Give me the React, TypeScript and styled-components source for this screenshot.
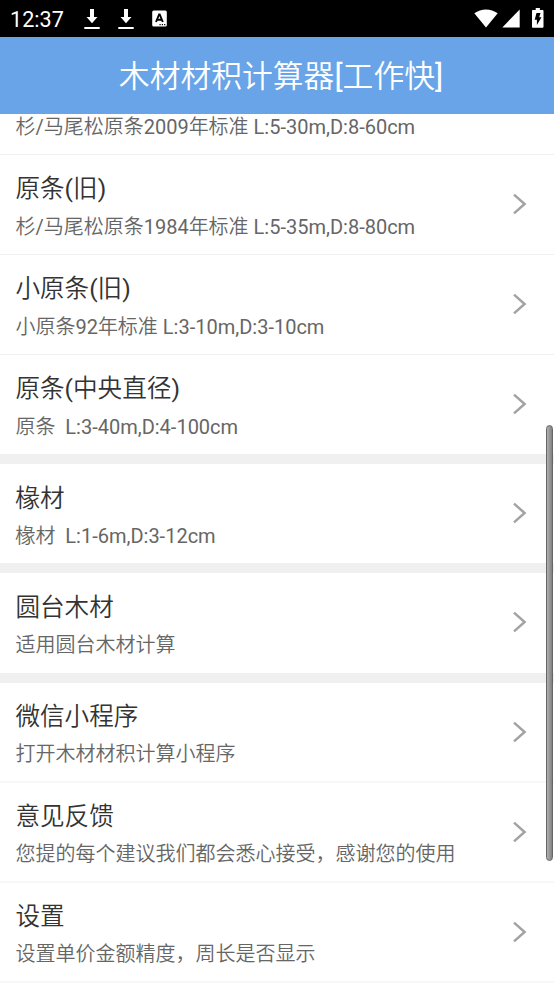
import React from 'react';
import styled, { createGlobalStyle } from 'styled-components';

const GlobalStyle = createGlobalStyle`
  * { box-sizing: border-box; }
  body { margin: 0; background: #fff; font-family: Roboto, "Noto Sans CJK SC", sans-serif; }
`;

const Screen = styled.div`
  position: relative;
  width: 554px;
  height: 984px;
  display: flex;
  flex-direction: column;
  overflow: hidden;
  background: #fff;
`;

const StatusBar = styled.div`
  flex: none;
  height: 37px;
  padding: 0 9px 0 10px;
  display: flex;
  align-items: center;
  justify-content: space-between;
  background: #000;
  color: #fff;
`;

const StatusGroup = styled.div`
  display: flex;
  align-items: center;
  height: 37px;
`;

const Clock = styled.span`
  width: 74px;
  font-size: 21.6px;
  font-weight: 450;
  line-height: 37px;
  padding-top: 1px;
`;

const StatusIcon = styled.svg<{ $gap?: number }>`
  display: block;
  flex: none;
  margin-left: ${(p) => p.$gap ?? 0}px;
`;

const Header = styled.header`
  flex: none;
  height: 77px;
  padding: 3px 0 0 8px;
  display: flex;
  align-items: center;
  justify-content: center;
  background: #68a4e7;
  color: #fff;
  font-size: 30.8px;
  line-height: 74px;
  white-space: nowrap;
`;

const List = styled.main`
  flex: 1;
  min-height: 0;
  display: flex;
  flex-direction: column;
  justify-content: flex-end;
  overflow: hidden;
  padding-bottom: 1px;
`;

const Row = styled.div<{ $height: number }>`
  flex: none;
  height: ${(p) => p.$height}px;
  padding: 0 27px 0 15.4px;
  display: flex;
  align-items: flex-start;
  justify-content: space-between;
`;

const Separator = styled.div<{ $size: number }>`
  flex: none;
  height: ${(p) => p.$size}px;
  background: ${(p) => (p.$size === 2 ? '#f7f7f7' : '#f0f0f0')};
`;

const Texts = styled.div<{ $top: number; $titleHeight: number }>`
  display: grid;
  grid-template-rows: ${(p) => p.$titleHeight}px 38px;
  padding-top: ${(p) => p.$top}px;
  white-space: pre;
`;

const Title = styled.div`
  font-size: 24.6px;
  line-height: 36px;
  color: #333;
`;

const Detail = styled.div`
  font-size: 20px;
  line-height: 38px;
  color: #666;
`;

const Han = styled.span`
  font-weight: 350;
`;

const ChevronIcon = styled.svg<{ $top: number }>`
  display: block;
  flex: none;
  margin-top: ${(p) => p.$top}px;
`;

const Scrollbar = styled.div`
  position: absolute;
  top: 425px;
  right: 1px;
  width: 7px;
  height: 436px;
  border: 1px solid #666;
  border-radius: 4px;
  background: linear-gradient(90deg, #b0b0b0, #808080);
`;

type Item = {
  title?: string;
  detail: string;
  height: number;
  after: number;
  top: number;
  titleHeight: number;
};

const upper = { height: 99, top: 16, titleHeight: 37 };
const middle = { height: 99, top: 17, titleHeight: 36 };
const lower = { height: 98, after: 2, top: 16, titleHeight: 36 };

const items: Item[] = [
  { ...upper, detail: '杉/马尾松原条2009年标准 L:5-30m,D:8-60cm', after: 1 },
  { ...upper, title: '原条(旧)', detail: '杉/马尾松原条1984年标准 L:5-35m,D:8-80cm', after: 1 },
  { ...upper, title: '小原条(旧)', detail: '小原条92年标准 L:3-10m,D:3-10cm', after: 1 },
  { ...upper, title: '原条(中央直径)', detail: '原条  L:3-40m,D:4-100cm', after: 10 },
  { ...middle, title: '椽材', detail: '椽材  L:1-6m,D:3-12cm', after: 10 },
  { ...middle, title: '圆台木材', detail: '适用圆台木材计算', height: 100, after: 10 },
  { ...lower, title: '微信小程序', detail: '打开木材材积计算小程序' },
  { ...lower, title: '意见反馈', detail: '您提的每个建议我们都会悉心接受，感谢您的使用' },
  { ...lower, title: '设置', detail: '设置单价金额精度，周长是否显示' },
];

// Sets Chinese runs in a lighter weight than the Latin letters and digits around them.
const Mixed = ({ text }: { text: string }) => (
  <span>
    {text
      .split(/([\u4e00-\u9fff，]+)/)
      .map((run, i) => (i % 2 ? <Han key={i}>{run}</Han> : run))}
  </span>
);

const DownloadIcon = ({ gap }: { gap: number }) => (
  <StatusIcon $gap={gap} width="16" height="22" viewBox="0 0 16 22" fill="#fff">
    <path d="M6 1h4v8h3.5L8 15.2 2.5 9H6zM0.3 19h15.4v2H0.3z" />
  </StatusIcon>
);

const Chevron = ({ top }: { top: number }) => (
  <ChevronIcon $top={top} width="14" height="22" viewBox="0 0 14 22" fill="none" stroke="#a3a3a3" strokeWidth="2.5">
    <path d="M1 1.6 11.6 11 1 20.4" />
  </ChevronIcon>
);

export default function App() {
  return (
    <Screen>
      <GlobalStyle />
      <StatusBar>
        <StatusGroup>
          <Clock>12:37</Clock>
          <DownloadIcon gap={0} />
          <DownloadIcon gap={18} />
          <StatusIcon $gap={18} width="15" height="17" viewBox="0 0 15 17">
            <rect x="0.2" y="0.5" width="14.6" height="16" rx="1.5" fill="#fff" />
            <path d="M4 12 7.1 4.5h.6L10.8 12M5.3 9.7h4.2" fill="none" stroke="#000" strokeWidth="1.9" />
            <path d="M7.5 14h1.2v1.2H7.5zM9.8 14H11v1.2H9.8zM12.1 14h1.2v1.2h-1.2z" fill="#000" />
          </StatusIcon>
        </StatusGroup>
        <StatusGroup>
          <StatusIcon width="24" height="20" viewBox="0 0 24 20" fill="#fff">
            <path d="M0.3 4.3C7.2-.8 16.8-.8 23.7 4.3L12 18.5z" />
          </StatusIcon>
          <StatusIcon $gap={4} width="18" height="19" viewBox="0 0 18 19" fill="#fff">
            <path d="M17.7.5v18H.3z" />
          </StatusIcon>
          <StatusIcon $gap={11} width="14" height="21" viewBox="0 0 14 21">
            <path d="M4.7 0h4.2v2h2.6c.6 0 1 .4 1 1v15.8c0 .6-.4 1-1 1H2c-.6 0-1-.4-1-1V3c0-.6.4-1 1-1h2.7z" fill="#fff" />
            <path d="M5.5 5h4L8.2 9.2h2.3L5.9 17v-5.2H3.7z" fill="#000" />
          </StatusIcon>
        </StatusGroup>
      </StatusBar>
      <Header>
        <Mixed text="木材材积计算器[工作快]" />
      </Header>
      <List>
        {items.map((item) => (
          <React.Fragment key={item.detail}>
            <Row $height={item.height}>
              <Texts $top={item.top} $titleHeight={item.titleHeight}>
                <Title>
                  <Mixed text={item.title ?? ''} />
                </Title>
                <Detail>
                  <Mixed text={item.detail} />
                </Detail>
              </Texts>
              <Chevron top={item.height > 98 ? 38.4 : 37.5} />
            </Row>
            <Separator $size={item.after} />
          </React.Fragment>
        ))}
      </List>
      <Scrollbar />
    </Screen>
  );
}
